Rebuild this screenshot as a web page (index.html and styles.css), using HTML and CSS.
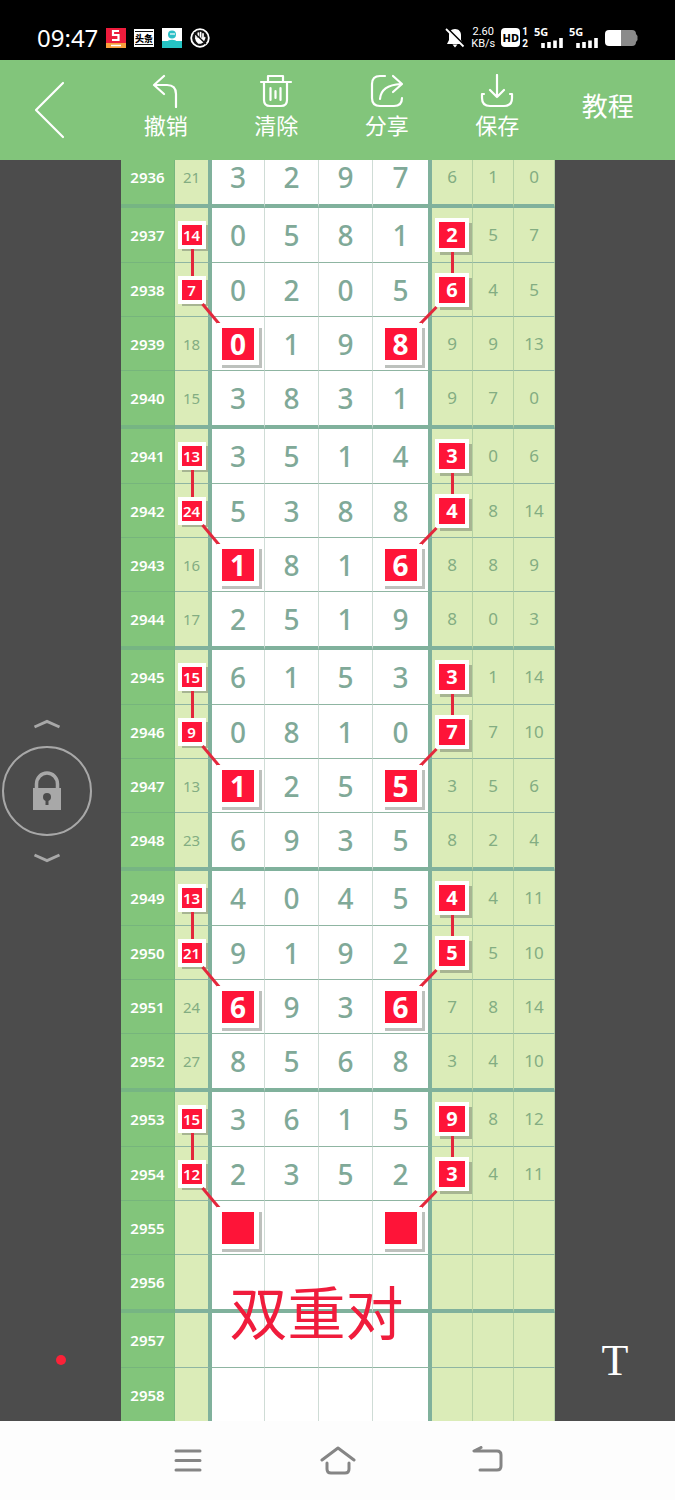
FILE: index.html
```
<!DOCTYPE html>
<html lang="zh-CN">
<head>
    <meta charset="UTF-8">
    <meta name="viewport" content="width=device-width, initial-scale=1">
    <title>双重对</title>
    <link rel="stylesheet" href="styles.css">
</head>
<body>
    <div class="status-bar">
        <span class="clock">09:47</span>
        <div class="notices">
            <svg width="20" height="20" viewBox="0 0 20 20">
                <rect width="20" height="20" fill="#ee1c3c"/>
                <rect y="15" width="20" height="5" fill="#f9a03c"/>
                <path d="M13 3H7v4h5.500v5H6" fill="none" stroke="#fff" stroke-width="2.200"/>
                <path d="M5 17.500h10" stroke="#fff" stroke-width="1.500"/>
            </svg>
            <svg width="20" height="20" viewBox="0 0 20 20">
                <rect y="1" width="20" height="18" fill="#fff"/>
                <path d="M1 3.500h18M1 16.500h18" stroke="#111" stroke-width="1"/>
                <text x="10" y="13.500" text-anchor="middle" class="tiny-cjk">头条</text>
            </svg>
            <svg width="20" height="20" viewBox="0 0 20 20">
                <rect width="20" height="20" fill="#fff"/>
                <rect y="13" width="20" height="7" fill="#25c4c4"/>
                <circle cx="10" cy="6.500" r="4" fill="#2bbfc6"/>
                <path d="M8 6h5" stroke="#fff" stroke-width="1.200"/>
                <path d="M5 14c1-3 9-3 10 0z" fill="#25c4c4"/>
            </svg>
            <svg width="20" height="20" viewBox="0 0 20 20">
                <circle cx="10" cy="10" r="8.800" fill="#111" stroke="#fff" stroke-width="1.800"/>
                <path d="M6 10.500V7.500M8.300 9V5M10.600 9V4.500M13 10V5.800" stroke="#fff" stroke-width="1.700" stroke-linecap="round"/>
                <path d="M5.200 9.500h8.800l.8-1 .8 1.200-2 4.500-2.600 1.600H8.200L5.800 13z" fill="#fff"/>
                <path d="M4 4.500l12 11.500" stroke="#111" stroke-width="1.500"/>
            </svg>
        </div>
        <div class="system">
            <svg width="20" height="20" viewBox="0 0 20 20">
                <path d="M10 1C6 1 4 4 4 7v5L2 16h16l-2-4V7c0-3-2-6-6-6z" fill="#fff"/>
                <path d="M7.500 16.500h5L10 19.500z" fill="#fff"/>
                <path d="M2 0l17 17" stroke="#000" stroke-width="2"/>
                <path d="M1 1l17.500 17.500" stroke="#fff" stroke-width="1.800"/>
            </svg>
            <span class="speed"><span>2.60</span><span>KB/s</span></span>
            <span class="hd">HD</span>
            <span class="sims"><span>1</span><span>2</span></span>
            <span class="signal">
                <b>5G</b>
                <svg width="22" height="11" viewBox="0 0 22 11">
                    <path d="M2 11V6M8 11V5M14 11V3.500M20 11V1" stroke="#fff" stroke-width="3.600"/>
                </svg>
            </span>
            <span class="signal">
                <b>5G</b>
                <svg width="22" height="11" viewBox="0 0 22 11">
                    <path d="M2 11V6M8 11V5M14 11V3.500M20 11V1" stroke="#fff" stroke-width="3.600"/>
                </svg>
            </span>
            <svg width="34" height="18" viewBox="0 0 34 18">
                <path d="M17 1h11a4 4 0 0 1 4 4l1.500 2v4L32 13a4 4 0 0 1-4 4H17z" fill="#8a8a8a"/>
                <path d="M5 1h12v16H5a4 4 0 0 1-4-4V5a4 4 0 0 1 4-4z" fill="#fff"/>
            </svg>
        </div>
    </div>

    <header class="toolbar">
        <button class="tool back" aria-label="返回">
            <svg width="32" height="58" viewBox="0 0 32 58"><path d="M30 2L3 29l27 27"/></svg>
        </button>
        <button class="tool">
            <svg width="34" height="34" viewBox="0 0 34 34"><path d="M15 2L5 11l10 9M5.500 11H18q9 0 9 9v13"/></svg>
            撤销
        </button>
        <button class="tool">
            <svg width="34" height="34" viewBox="0 0 34 34"><path d="M2 8h30M9 8V2h15v6M5 8v18q0 6 6 6h11q6 0 6-6V8M11.500 14v12M16.500 17v7M21.500 14v12"/></svg>
            清除
        </button>
        <button class="tool">
            <svg width="34" height="34" viewBox="0 0 34 34"><path d="M15 2H10Q2 2 2 10v14q0 8 8 8h14q8 0 8-8M10 25q1-14 21-15M23 2l9 8-9 8"/></svg>
            分享
        </button>
        <button class="tool">
            <svg width="34" height="34" viewBox="0 0 34 34"><path d="M17 1v22M10 16l7 7 7-7M4 20H2v4q0 8 8 8h14q8 0 8-8v-4h-2"/></svg>
            保存
        </button>
        <button class="tool tutorial">教程</button>
    </header>

    <main class="board">
        <aside class="side">
            <div class="lock-control">
                <button aria-label="上移">
                    <svg width="28" height="10" viewBox="0 0 28 10"><path d="M1.500 8L14 2.500 26.500 8"/></svg>
                </button>
                <button class="lock" aria-label="锁定">
                    <svg width="30" height="40" viewBox="0 0 30 40">
                        <path d="M4.500 18V13a10.500 11 0 0 1 21 0v5" stroke-width="3.500"/>
                        <path d="M1 17h28v22H1z" fill="#a8a8a8" stroke="none"/>
                        <circle cx="15" cy="26" r="4" fill="#4c4c4c" stroke="none"/>
                        <path d="M15 27v7" stroke="#4c4c4c" stroke-width="3"/>
                    </svg>
                </button>
                <button aria-label="下移">
                    <svg width="28" height="10" viewBox="0 0 28 10"><path d="M1.500 2L14 7.500 26.500 2"/></svg>
                </button>
            </div>
            <button class="brush" aria-label="画笔"></button>
        </aside>

        <div class="chart">
            <table>
                <colgroup>
                    <col class="c-issue"><col class="c-sum"><col class="c-first"><col class="c-num"><col class="c-num">
                    <col class="c-last"><col class="c-tail"><col class="c-tail"><col class="c-tail">
                </colgroup>
                <tbody>
                    <tr class="end"><th scope="row">2936</th><td>21</td><td>3</td><td>2</td><td>9</td><td>7</td><td>6</td><td>1</td><td>0</td></tr>
                </tbody>
                <tbody>
                    <tr class="start"><th scope="row">2937</th><td><span class="mark small down">14</span></td><td>0</td><td>5</td><td>8</td><td>1</td><td><span class="mark medium down">2</span></td><td>5</td><td>7</td></tr>
                    <tr><th scope="row">2938</th><td><span class="mark small to-right">7</span></td><td>0</td><td>2</td><td>0</td><td>5</td><td><span class="mark medium to-left">6</span></td><td>4</td><td>5</td></tr>
                    <tr><th scope="row">2939</th><td>18</td><td><span class="mark large">0</span></td><td>1</td><td>9</td><td><span class="mark large">8</span></td><td>9</td><td>9</td><td>13</td></tr>
                    <tr class="end"><th scope="row">2940</th><td>15</td><td>3</td><td>8</td><td>3</td><td>1</td><td>9</td><td>7</td><td>0</td></tr>
                </tbody>
                <tbody>
                    <tr class="start"><th scope="row">2941</th><td><span class="mark small down">13</span></td><td>3</td><td>5</td><td>1</td><td>4</td><td><span class="mark medium down">3</span></td><td>0</td><td>6</td></tr>
                    <tr><th scope="row">2942</th><td><span class="mark small to-right">24</span></td><td>5</td><td>3</td><td>8</td><td>8</td><td><span class="mark medium to-left">4</span></td><td>8</td><td>14</td></tr>
                    <tr><th scope="row">2943</th><td>16</td><td><span class="mark large">1</span></td><td>8</td><td>1</td><td><span class="mark large">6</span></td><td>8</td><td>8</td><td>9</td></tr>
                    <tr class="end"><th scope="row">2944</th><td>17</td><td>2</td><td>5</td><td>1</td><td>9</td><td>8</td><td>0</td><td>3</td></tr>
                </tbody>
                <tbody>
                    <tr class="start"><th scope="row">2945</th><td><span class="mark small down">15</span></td><td>6</td><td>1</td><td>5</td><td>3</td><td><span class="mark medium down">3</span></td><td>1</td><td>14</td></tr>
                    <tr><th scope="row">2946</th><td><span class="mark small to-right">9</span></td><td>0</td><td>8</td><td>1</td><td>0</td><td><span class="mark medium to-left">7</span></td><td>7</td><td>10</td></tr>
                    <tr><th scope="row">2947</th><td>13</td><td><span class="mark large">1</span></td><td>2</td><td>5</td><td><span class="mark large">5</span></td><td>3</td><td>5</td><td>6</td></tr>
                    <tr class="end"><th scope="row">2948</th><td>23</td><td>6</td><td>9</td><td>3</td><td>5</td><td>8</td><td>2</td><td>4</td></tr>
                </tbody>
                <tbody>
                    <tr class="start"><th scope="row">2949</th><td><span class="mark small down">13</span></td><td>4</td><td>0</td><td>4</td><td>5</td><td><span class="mark medium down">4</span></td><td>4</td><td>11</td></tr>
                    <tr><th scope="row">2950</th><td><span class="mark small to-right">21</span></td><td>9</td><td>1</td><td>9</td><td>2</td><td><span class="mark medium to-left">5</span></td><td>5</td><td>10</td></tr>
                    <tr><th scope="row">2951</th><td>24</td><td><span class="mark large">6</span></td><td>9</td><td>3</td><td><span class="mark large">6</span></td><td>7</td><td>8</td><td>14</td></tr>
                    <tr class="end"><th scope="row">2952</th><td>27</td><td>8</td><td>5</td><td>6</td><td>8</td><td>3</td><td>4</td><td>10</td></tr>
                </tbody>
                <tbody>
                    <tr class="start"><th scope="row">2953</th><td><span class="mark small down">15</span></td><td>3</td><td>6</td><td>1</td><td>5</td><td><span class="mark medium down">9</span></td><td>8</td><td>12</td></tr>
                    <tr><th scope="row">2954</th><td><span class="mark small to-right">12</span></td><td>2</td><td>3</td><td>5</td><td>2</td><td><span class="mark medium to-left">3</span></td><td>4</td><td>11</td></tr>
                    <tr><th scope="row">2955</th><td></td><td><span class="mark large"></span></td><td></td><td></td><td><span class="mark large"></span></td><td></td><td></td><td></td></tr>
                    <tr class="end"><th scope="row">2956</th><td></td><td></td><td></td><td></td><td></td><td></td><td></td><td></td></tr>
                </tbody>
                <tbody>
                    <tr class="start"><th scope="row">2957</th><td></td><td></td><td></td><td></td><td></td><td></td><td></td><td></td></tr>
                    <tr class="last"><th scope="row">2958</th><td></td><td></td><td></td><td></td><td></td><td></td><td></td><td></td></tr>
                </tbody>
            </table>
            <div class="note">双重对</div>
        </div>

        <aside class="side">
            <button class="text-tool" aria-label="文字">T</button>
        </aside>
    </main>

    <nav class="nav-bar">
        <button aria-label="菜单">
            <svg width="30" height="30" viewBox="0 0 30 30"><path d="M3 5h24M3 14.500h24M3 24h24"/></svg>
        </button>
        <button aria-label="主页">
            <svg width="36" height="30" viewBox="0 0 36 30"><path d="M2 14L18 2l16 12M7 17v6q0 4 4 4h14q4 0 4-4v-6"/></svg>
        </button>
        <button aria-label="返回">
            <svg width="32" height="30" viewBox="0 0 32 30"><path d="M9 1.500L2 5h23q4 0 4 4v11q0 4-4 4H8"/></svg>
        </button>
    </nav>
</body>
</html>
```
FILE: styles.css
```
* {
    box-sizing: border-box;
}

body {
    margin: 0;
    min-height: 100vh;
    display: flex;
    flex-direction: column;
    font-family: "Noto Sans", "Noto Sans CJK SC", sans-serif;
    background-color: #4c4c4c;
}

button {
    display: flex;
    align-items: center;
    justify-content: center;
    margin: 0;
    padding: 0;
    border: none;
    background: none;
    font-family: inherit;
    color: inherit;
    cursor: pointer;
}

svg {
    display: block;
    flex: none;
}

button svg {
    fill: none;
    stroke: currentColor;
}

/* Status bar */
.status-bar {
    display: flex;
    align-items: center;
    height: 60px;
    padding: 15px 37px 0;
    background-color: #000;
    color: #fff;
}

.clock {
    font-size: 24px;
    line-height: 24px;
}

.notices {
    display: flex;
    gap: 8px;
    margin-left: 8px;
}

.tiny-cjk {
    font-family: "Noto Sans CJK SC", sans-serif;
    font-size: 9px;
    font-weight: 900;
}

.system {
    display: flex;
    align-items: center;
    gap: 6px;
    margin-left: auto;
}

.speed,
.sims {
    display: flex;
    flex-direction: column;
    font-family: Roboto, sans-serif;
    font-size: 11px;
    line-height: 12px;
    text-align: center;
}

.hd {
    width: 19px;
    border-radius: 4px;
    background-color: #fff;
    color: #000;
    font-size: 11px;
    font-weight: 800;
    line-height: 19px;
    text-align: center;
}

.sims {
    margin-left: -4px;
    font-size: 10px;
    font-weight: 700;
}

.signal {
    width: 29px;
}

.signal b {
    display: block;
    font-size: 11px;
    line-height: 10px;
}

.signal svg {
    margin-left: auto;
}

/* Toolbar */
.toolbar {
    display: grid;
    grid-template-columns: repeat(6, 1fr);
    height: 100px;
    padding-right: 12px;
    background-color: #82c57b;
    color: #fff;
}

.tool {
    flex-direction: column;
    justify-content: flex-start;
    padding-top: 14px;
    font-size: 22px;
    line-height: 34px;
}

.tool svg {
    stroke-width: 2.200;
    stroke-linecap: round;
    stroke-linejoin: round;
}

.tool.back {
    align-items: flex-start;
    padding-top: 21px;
    padding-left: 33px;
}

.tool.tutorial {
    padding-top: 29px;
    font-size: 26px;
}

/* Board */
.board {
    flex: 1;
    display: grid;
    grid-template-columns: 121fr 434fr 120fr;
    overflow: hidden;
    color: #a8a8a8;
}

.side {
    display: grid;
    grid-template-rows: 1fr auto 1fr;
}

.lock-control {
    grid-row: 2;
    justify-self: start;
    display: flex;
    flex-direction: column;
    align-items: center;
    gap: 17px;
    margin-left: 2px;
}

.lock-control svg {
    stroke-width: 3;
}

.lock {
    width: 90px;
    height: 90px;
    border: 2px solid #a8a8a8;
    border-radius: 50%;
}

.brush,
.text-tool {
    grid-row: 3;
    place-self: end center;
}

.brush {
    width: 10px;
    height: 10px;
    margin-bottom: 56px;
    border-radius: 50%;
    background-color: #fb2238;
}

.text-tool {
    margin-bottom: 38px;
    font-family: "Liberation Serif", serif;
    font-size: 44px;
    line-height: 44px;
    color: #fff;
}

/* Chart table, the first row is scrolled partly under the toolbar */
.chart {
    position: relative;
    margin-top: -10px;
}

table {
    width: 100%;
    table-layout: fixed;
    border-spacing: 0;
}

.c-issue, .c-num { width: 54px; }
.c-sum { width: 37px; }
.c-first { width: 53px; }
.c-last { width: 59px; }
.c-tail { width: 41px; }

th,
td {
    height: 54px;
    padding: 0;
    border-bottom: 1px solid #8fb5a2;
    border-right: 1px solid #cfdcd6;
    background-color: #fff;
    color: #80a998;
    font-size: 28px;
    font-weight: 500;
    line-height: 28px;
    text-align: center;
}

th {
    border-color: #76b57c;
    background-color: #82c57b;
    color: #fff;
    font-size: 15px;
    font-weight: 600;
}

td:nth-child(2),
td:nth-child(n+7) {
    border-right-color: #b6d2a3;
    background-color: #dbecb8;
    color: #83ad82;
    font-size: 17px;
    font-weight: 400;
}

td:nth-child(2) {
    font-size: 15px;
}

td:nth-child(2),
td:nth-child(6) {
    border-right: 4px solid #80b19c;
}

.start th,
.start td {
    height: 55px;
}

.end th,
.end td {
    height: 58px;
    border-bottom: 4px solid #80b19c;
}

.end th {
    border-bottom-color: #76b583;
}

.last th,
.last td {
    height: 53px;
    border-bottom: none;
}

/* Red picks and the lines between them */
.mark {
    position: relative;
    display: block;
    width: 34px;
    height: 34px;
    margin: 0 auto;
    border: 4px solid #fff;
    background-color: #fe1438;
    box-shadow: 4px 4px 0 -1px rgba(90, 100, 90, 0.4);
    color: #fff;
    font-size: 20px;
    font-weight: 700;
    line-height: 26px;
}

.mark.small {
    width: 28px;
    height: 28px;
    box-shadow: 3px 3px 0 -1px rgba(90, 100, 90, 0.4);
    font-size: 15px;
    font-weight: 600;
    line-height: 20px;
}

.mark.large {
    width: 42px;
    height: 42px;
    border-width: 5px;
    font-size: 28px;
    line-height: 32px;
}

.down::after,
.to-right::after,
.to-left::after {
    content: "";
    position: absolute;
    top: 100%;
    left: 50%;
    width: 3px;
    height: 28px;
    margin-top: 4px;
    margin-left: -1px;
    background-color: #e3283c;
    transform-origin: top;
}

.to-right::after {
    left: 100%;
    transform: rotate(-40deg);
}

.to-left::after {
    left: 0;
    margin-left: -4px;
    transform: rotate(44deg);
}

.note {
    position: absolute;
    bottom: 78px;
    left: 25%;
    color: #f01c3c;
    font-size: 58px;
    line-height: 60px;
    white-space: nowrap;
}

/* System navigation */
.nav-bar {
    display: flex;
    height: 79px;
    padding: 0 16.667%;
    background-color: #fdfdfd;
    color: #858585;
}

.nav-bar button {
    flex: 1;
}

.nav-bar svg {
    stroke-width: 3;
    stroke-linecap: round;
    stroke-linejoin: round;
}
```
